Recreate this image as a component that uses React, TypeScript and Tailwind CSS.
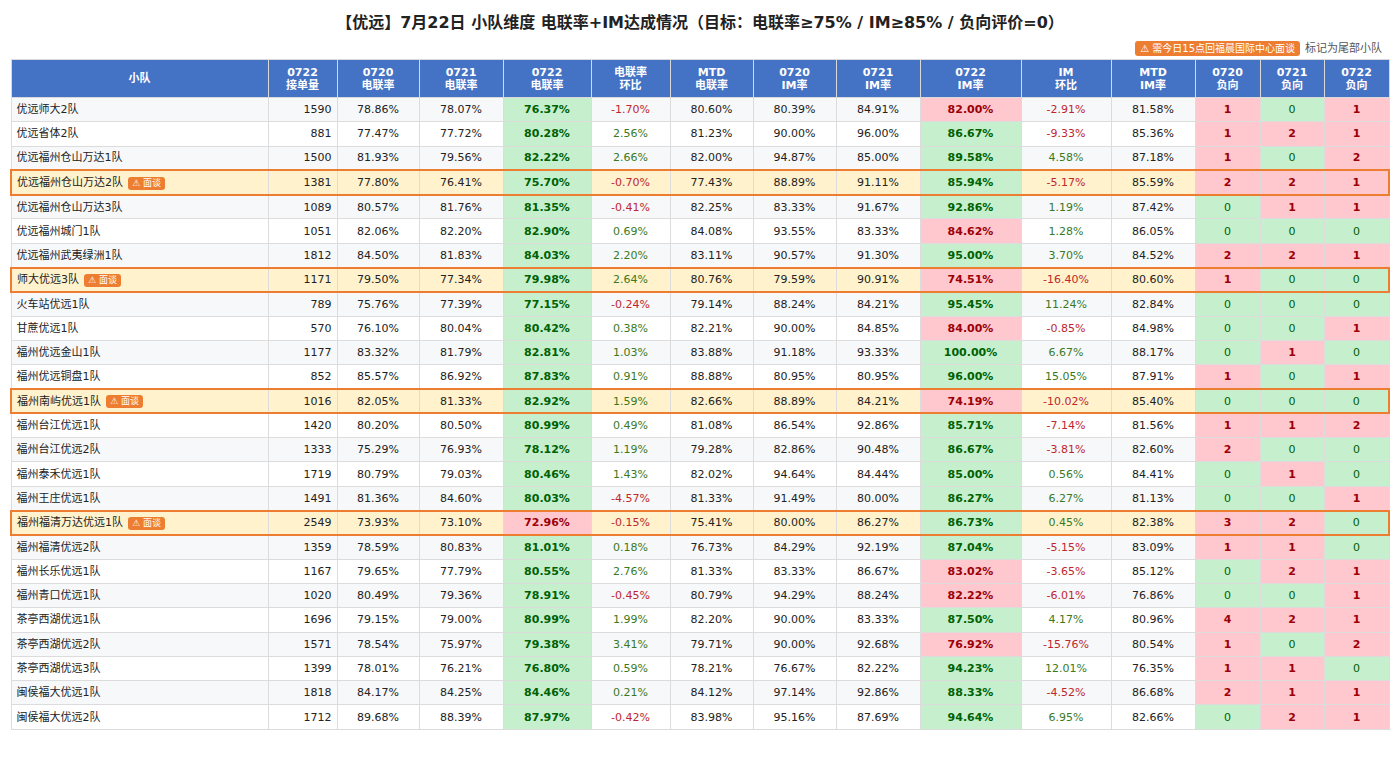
const rows: (string | number | boolean)[][] = [
  ["优远师大2队", false, 1590, "78.86%", "78.07%", "76.37%", "-1.70%", "80.60%", "80.39%", "84.91%", "82.00%", "-2.91%", "81.58%", 1, 0, 1],
  ["优远省体2队", false, 881, "77.47%", "77.72%", "80.28%", "2.56%", "81.23%", "90.00%", "96.00%", "86.67%", "-9.33%", "85.36%", 1, 2, 1],
  ["优远福州仓山万达1队", false, 1500, "81.93%", "79.56%", "82.22%", "2.66%", "82.00%", "94.87%", "85.00%", "89.58%", "4.58%", "87.18%", 1, 0, 2],
  ["优远福州仓山万达2队", true, 1381, "77.80%", "76.41%", "75.70%", "-0.70%", "77.43%", "88.89%", "91.11%", "85.94%", "-5.17%", "85.59%", 2, 2, 1],
  ["优远福州仓山万达3队", false, 1089, "80.57%", "81.76%", "81.35%", "-0.41%", "82.25%", "83.33%", "91.67%", "92.86%", "1.19%", "87.42%", 0, 1, 1],
  ["优远福州城门1队", false, 1051, "82.06%", "82.20%", "82.90%", "0.69%", "84.08%", "93.55%", "83.33%", "84.62%", "1.28%", "86.05%", 0, 0, 0],
  ["优远福州武夷绿洲1队", false, 1812, "84.50%", "81.83%", "84.03%", "2.20%", "83.11%", "90.57%", "91.30%", "95.00%", "3.70%", "84.52%", 2, 2, 1],
  ["师大优远3队", true, 1171, "79.50%", "77.34%", "79.98%", "2.64%", "80.76%", "79.59%", "90.91%", "74.51%", "-16.40%", "80.60%", 1, 0, 0],
  ["火车站优远1队", false, 789, "75.76%", "77.39%", "77.15%", "-0.24%", "79.14%", "88.24%", "84.21%", "95.45%", "11.24%", "82.84%", 0, 0, 0],
  ["甘蔗优远1队", false, 570, "76.10%", "80.04%", "80.42%", "0.38%", "82.21%", "90.00%", "84.85%", "84.00%", "-0.85%", "84.98%", 0, 0, 1],
  ["福州优远金山1队", false, 1177, "83.32%", "81.79%", "82.81%", "1.03%", "83.88%", "91.18%", "93.33%", "100.00%", "6.67%", "88.17%", 0, 1, 0],
  ["福州优远铜盘1队", false, 852, "85.57%", "86.92%", "87.83%", "0.91%", "88.88%", "80.95%", "80.95%", "96.00%", "15.05%", "87.91%", 1, 0, 1],
  ["福州南屿优远1队", true, 1016, "82.05%", "81.33%", "82.92%", "1.59%", "82.66%", "88.89%", "84.21%", "74.19%", "-10.02%", "85.40%", 0, 0, 0],
  ["福州台江优远1队", false, 1420, "80.20%", "80.50%", "80.99%", "0.49%", "81.08%", "86.54%", "92.86%", "85.71%", "-7.14%", "81.56%", 1, 1, 2],
  ["福州台江优远2队", false, 1333, "75.29%", "76.93%", "78.12%", "1.19%", "79.28%", "82.86%", "90.48%", "86.67%", "-3.81%", "82.60%", 2, 0, 0],
  ["福州泰禾优远1队", false, 1719, "80.79%", "79.03%", "80.46%", "1.43%", "82.02%", "94.64%", "84.44%", "85.00%", "0.56%", "84.41%", 0, 1, 0],
  ["福州王庄优远1队", false, 1491, "81.36%", "84.60%", "80.03%", "-4.57%", "81.33%", "91.49%", "80.00%", "86.27%", "6.27%", "81.13%", 0, 0, 1],
  ["福州福清万达优远1队", true, 2549, "73.93%", "73.10%", "72.96%", "-0.15%", "75.41%", "80.00%", "86.27%", "86.73%", "0.45%", "82.38%", 3, 2, 0],
  ["福州福清优远2队", false, 1359, "78.59%", "80.83%", "81.01%", "0.18%", "76.73%", "84.29%", "92.19%", "87.04%", "-5.15%", "83.09%", 1, 1, 0],
  ["福州长乐优远1队", false, 1167, "79.65%", "77.79%", "80.55%", "2.76%", "81.33%", "83.33%", "86.67%", "83.02%", "-3.65%", "85.12%", 0, 2, 1],
  ["福州青口优远1队", false, 1020, "80.49%", "79.36%", "78.91%", "-0.45%", "80.79%", "94.29%", "88.24%", "82.22%", "-6.01%", "76.86%", 0, 0, 1],
  ["茶亭西湖优远1队", false, 1696, "79.15%", "79.00%", "80.99%", "1.99%", "82.20%", "90.00%", "83.33%", "87.50%", "4.17%", "80.96%", 4, 2, 1],
  ["茶亭西湖优远2队", false, 1571, "78.54%", "75.97%", "79.38%", "3.41%", "79.71%", "90.00%", "92.68%", "76.92%", "-15.76%", "80.54%", 1, 0, 2],
  ["茶亭西湖优远3队", false, 1399, "78.01%", "76.21%", "76.80%", "0.59%", "78.21%", "76.67%", "82.22%", "94.23%", "12.01%", "76.35%", 1, 1, 0],
  ["闽侯福大优远1队", false, 1818, "84.17%", "84.25%", "84.46%", "0.21%", "84.12%", "97.14%", "92.86%", "88.33%", "-4.52%", "86.68%", 2, 1, 1],
  ["闽侯福大优远2队", false, 1712, "89.68%", "88.39%", "87.97%", "-0.42%", "83.98%", "95.16%", "87.69%", "94.64%", "6.95%", "82.66%", 0, 2, 1],
];

const headers = [
  ["小队"],
  ["0722", "接单量"],
  ["0720", "电联率"],
  ["0721", "电联率"],
  ["0722", "电联率"],
  ["电联率", "环比"],
  ["MTD", "电联率"],
  ["0720", "IM率"],
  ["0721", "IM率"],
  ["0722", "IM率"],
  ["IM", "环比"],
  ["MTD", "IM率"],
  ["0720", "负向"],
  ["0721", "负向"],
  ["0722", "负向"],
];

const widths = [
  "w-[257px]", "w-[69px]", "w-[82px]", "w-[84px]", "w-[88px]", "w-[79px]", "w-[83px]", "w-[83px]",
  "w-[84px]", "w-[101px]", "w-[90px]", "w-[84px]", "w-[65px]", "w-[64px]", "w-[65px]",
];

const good = "bg-[#c6efce] text-[#006100] font-bold";
const bad = "bg-[#ffc7ce] text-[#9c0006] font-bold";

const Badge = () => (
  <span className="ml-[5px] inline-block rounded-[3px] bg-[#ed7d31] px-[4px] text-[9px] leading-[13px] text-white align-middle">
    ⚠ 面谈
  </span>
);

function cellClass(col: number, v: string | number) {
  const pct = typeof v === "string" ? parseFloat(v) : v;
  if (col === 5) return pct >= 75 ? good : bad;
  if (col === 10) return pct >= 85 ? good : bad;
  if (col >= 13) return pct === 0 ? "bg-[#c6efce] text-[#006100]" : bad;
  if (col === 6 || col === 11) return pct < 0 ? "text-[#c0272d]" : "text-[#3a7a1e]";
  return "text-[#222]";
}

const App = () => {
  return (
    <div
      className="min-h-[761px] bg-white px-[10px] pt-[12px] text-[11px] text-[#222]"
      style={{ fontFamily: '"DejaVu Sans", "Noto Sans CJK SC", sans-serif' }}
    >
      {/* Title */}
      <h1 className="text-center text-[16px] font-bold leading-[22px] text-[#222]">
        【优远】7月22日 小队维度 电联率+IM达成情况（目标：电联率≥75% / IM≥85% / 负向评价=0）
      </h1>

      {/* Legend */}
      <div className="mt-[7px] mb-[3px] flex items-center justify-end gap-[5px] pr-[8px] leading-[15px]">
        <span className="rounded-[3px] bg-[#ed7d31] px-[5px] text-[10px] text-white">⚠ 需今日15点回福晨国际中心面谈</span>
        <span className="text-[11px] text-[#555]">标记为尾部小队</span>
      </div>

      <table className="w-[1378px] table-fixed border-collapse">
        <colgroup>
          {widths.map((w, i) => (
            <col key={i} className={w} />
          ))}
        </colgroup>
        <thead>
          <tr>
            {headers.map((h, i) => (
              <th
                key={i}
                className="h-[38px] border border-[#d9d9d9] bg-[#4472c4] px-[2px] text-center text-[11px] font-bold leading-[13px] text-white"
              >
                {h.map((line, j) => (
                  <div key={j}>{line}</div>
                ))}
              </th>
            ))}
          </tr>
        </thead>
        <tbody>
          {rows.map((r, ri) => {
            const hl = r[1] as boolean;
            const vals = [r[0], ...r.slice(2)] as (string | number)[];
            const rowBg = hl ? "bg-[#fff2cc]" : ri % 2 === 0 ? "bg-[#f7f8fa]" : "bg-white";
            return (
              <tr key={ri} className={rowBg}>
                {vals.map((v, ci) => {
                  const hlBorder = hl
                    ? `border-y-2 border-y-[#ed7d31] ${ci === 0 ? "border-l-2 border-l-[#ed7d31]" : ""} ${
                        ci === vals.length - 1 ? "border-r-2 border-r-[#ed7d31]" : ""
                      }`
                    : "";
                  if (ci === 0) {
                    return (
                      <td
                        key={ci}
                        className={`h-[24.3px] border border-[#dcdcdc] px-[5px] py-0 text-left leading-[15px] whitespace-nowrap ${hlBorder}`}
                      >
                        {v}
                        {hl && <Badge />}
                      </td>
                    );
                  }
                  if (ci === 1) {
                    return (
                      <td
                        key={ci}
                        className={`border border-[#dcdcdc] px-[5px] py-0 text-right leading-[15px] ${hlBorder}`}
                      >
                        {v}
                      </td>
                    );
                  }
                  return (
                    <td
                      key={ci}
                      className={`border border-[#dcdcdc] px-[2px] py-0 text-center leading-[15px] ${cellClass(
                        ci + 1,
                        v
                      )} ${hlBorder}`}
                    >
                      {v}
                    </td>
                  );
                })}
              </tr>
            );
          })}
        </tbody>
      </table>
    </div>
  );
};

export default App;
